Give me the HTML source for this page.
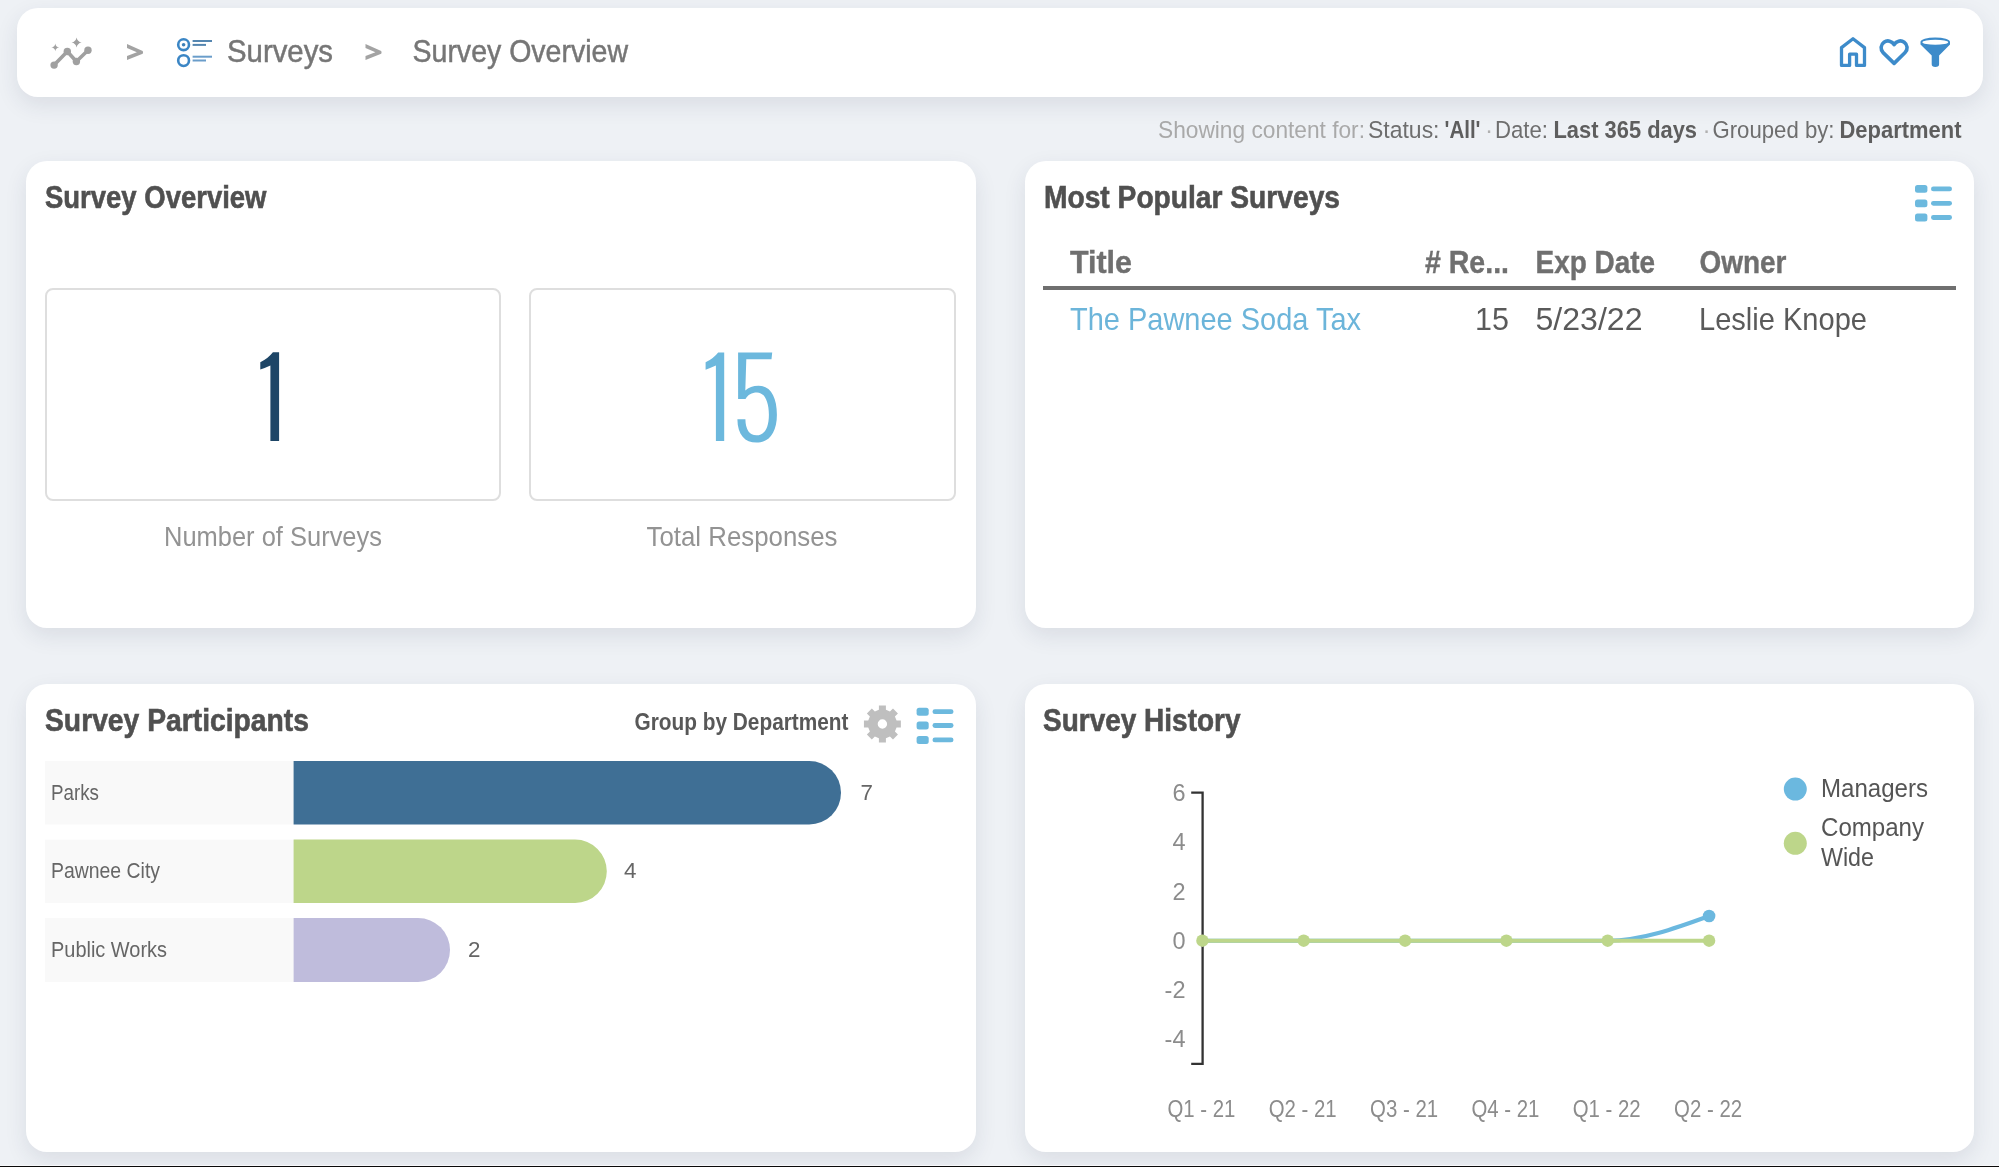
<!DOCTYPE html>
<html>
<head>
<meta charset="utf-8">
<style>
html,body{margin:0;padding:0;}
body{width:1999px;height:1167px;overflow:hidden;background:#eef1f5;position:relative;font-family:"Liberation Sans",sans-serif;}
.abs{position:absolute;}
.card{position:absolute;background:#fff;border-radius:21px;box-shadow:0 8px 22px rgba(40,50,80,0.10);}
#hdr{left:17px;top:8px;width:1966px;height:89px;}
#c1{left:26px;top:161px;width:950px;height:467px;}
#c2{left:1025px;top:161px;width:949px;height:467px;}
#c3{left:26px;top:684px;width:950px;height:468px;}
#c4{left:1025px;top:684px;width:949px;height:468px;}
#bline{left:0;top:1166px;width:1999px;height:1px;background:#0a0a0a;}
#wline{left:0;top:1165px;width:1999px;height:1px;background:#f7f8fa;}
.box{position:absolute;border:2px solid #dedede;border-radius:8px;background:#fff;box-sizing:border-box;}
#svg{position:absolute;left:0;top:0;will-change:transform;}
text{font-family:"Liberation Sans",sans-serif;}
.ttl{font-weight:bold;fill:#505050;font-size:31.3px;stroke:#505050;stroke-width:0.6px;}
</style>
</head>
<body>
<div class="card" id="hdr"></div>
<div class="card" id="c1"></div>
<div class="card" id="c2"></div>
<div class="card" id="c3"></div>
<div class="card" id="c4"></div>
<div class="box" style="left:45px;top:288px;width:456px;height:213px;"></div>
<div class="box" style="left:529px;top:288px;width:427px;height:213px;"></div>
<div class="abs" id="wline"></div><div class="abs" id="bline"></div>
<svg id="svg" width="1999" height="1167" viewBox="0 0 1999 1167">
<!-- ===== HEADER ===== -->
<g id="chartIcon" fill="#a0a0a0" stroke="#a0a0a0">
  <polyline points="54.1,65.1 67.3,51.5 76.4,61.5 88,50.2" fill="none" stroke-width="3.6" stroke-linejoin="round"/>
  <circle cx="54.1" cy="65.1" r="3.7" stroke="none"/>
  <circle cx="67.3" cy="51.5" r="3.7" stroke="none"/>
  <circle cx="76.4" cy="61.5" r="3.7" stroke="none"/>
  <circle cx="88" cy="50.2" r="3.7" stroke="none"/>
  <path d="M76.6,37.6 Q77.4,41.8 81.6,42.6 Q77.4,43.4 76.6,47.6 Q75.8,43.4 71.6,42.6 Q75.8,41.8 76.6,37.6Z" stroke="none"/>
  <path d="M55.3,43.5 Q55.6,47.1 59.2,47.4 Q55.6,47.7 55.3,51.3 Q55,47.7 51.4,47.4 Q55,47.1 55.3,43.5Z" stroke="none"/>
</g>
<path transform="translate(-238.5,0)" d="M365.5,44 L381.2,51 Q382,52.4 381.2,53.8 L365.5,60 V56 L375.4,52.3 L365.5,48 Z" fill="#a3a3a3"/>
<g id="surveyIcon" stroke="#3b86c5" fill="none">
  <circle cx="183.6" cy="44.7" r="5.4" stroke-width="2.6"/>
  <circle cx="183.6" cy="44.7" r="1.8" fill="#3d80b8" stroke="none"/>
  <circle cx="183.6" cy="60.6" r="5.4" stroke-width="2.6"/>
  <line x1="192.6" y1="41" x2="212" y2="41" stroke-width="2" stroke="#5586b0"/>
  <line x1="192.6" y1="44.9" x2="206" y2="44.9" stroke-width="2" stroke="#5586b0"/>
  <line x1="192.6" y1="56.7" x2="212" y2="56.7" stroke-width="2" stroke="#6a9dca"/>
  <line x1="192.6" y1="60.5" x2="206" y2="60.5" stroke-width="2" stroke="#6a9dca"/>
</g>
<text x="227" y="62" font-size="31.5" fill="#767676" stroke="#767676" stroke-width="0.5" textLength="106" lengthAdjust="spacingAndGlyphs">Surveys</text>
<path d="M365.5,44 L381.2,51 Q382,52.4 381.2,53.8 L365.5,60 V56 L375.4,52.3 L365.5,48 Z" fill="#a3a3a3"/>
<text x="412.5" y="62" font-size="31.5" fill="#767676" stroke="#767676" stroke-width="0.5" textLength="215.5" lengthAdjust="spacingAndGlyphs">Survey Overview</text>

<g id="homeIcon" fill="none" stroke="#3d8bca" stroke-width="3.3" stroke-linejoin="round">
  <path d="M1841.5,65.4 V47.6 L1853,38.8 L1864.5,47.6 V65.4 H1856.5 V54.2 H1849.6 V65.4 Z"/>
</g>
<g id="heartIcon" fill="none" stroke="#3d8bca" stroke-width="3.6" stroke-linejoin="round">
  <path d="M1894.1,63.4 L1883.1,52.6 A6.85,6.85 0 1 1 1894.1,44.73 A6.85,6.85 0 1 1 1905.1,52.6 Z"/>
</g>
<g id="funnelIcon" fill="#3d8bca">
  <path d="M1920.5,42 A14.75,4.6 0 0 1 1950,42 V44.6 L1939.1,55.6 V64.3 Q1939.1,66.9 1935.35,66.9 Q1931.7,66.9 1931.7,64.3 V55.6 L1920.5,44.6 Z"/>
  <ellipse cx="1935.3" cy="42.2" rx="12.9" ry="2.5" fill="#fff"/>
</g>

<!-- filter line -->
<g font-size="24.3">
<text x="1158" y="138" fill="#a9a9a9" textLength="207" lengthAdjust="spacingAndGlyphs">Showing content for:</text>
<text x="1368" y="138" fill="#6e6e6e" textLength="71.5" lengthAdjust="spacingAndGlyphs">Status:</text>
<text x="1444.5" y="138" fill="#5e5e5e" font-weight="bold" textLength="36" lengthAdjust="spacingAndGlyphs">'All'</text>
<text x="1485" y="138" fill="#b0b0b0">·</text>
<text x="1495" y="138" fill="#6e6e6e" textLength="53" lengthAdjust="spacingAndGlyphs">Date:</text>
<text x="1553.5" y="138" fill="#5e5e5e" font-weight="bold" textLength="143.5" lengthAdjust="spacingAndGlyphs">Last 365 days</text>
<text x="1702.5" y="138" fill="#b0b0b0">·</text>
<text x="1712.5" y="138" fill="#6e6e6e" textLength="122" lengthAdjust="spacingAndGlyphs">Grouped by:</text>
<text x="1839.5" y="138" fill="#5e5e5e" font-weight="bold" textLength="122" lengthAdjust="spacingAndGlyphs">Department</text>
</g>

<!-- ===== CARD 1 ===== -->
<text class="ttl" x="45" y="208" textLength="221.5" lengthAdjust="spacingAndGlyphs">Survey Overview</text>
<path d="M272.9,352.3 H279.1 V440.9 H270.4 V365.4 Q265.6,367.6 260.3,369.6 V362.2 Q268,358.6 272.9,352.3 Z" fill="#1d4566"/>
<path d="M718.2,352.5 H724.2 V440.9 H715.9 V365.6 Q711,367.8 705.6,369.8 V362.3 Q713.2,358.8 718.2,352.5 Z" fill="#6cb8dd"/><path d="M738.1,352.5 H772.2 L771.5,359.2 H746.3 L745.3,390.5 C748.5,387.5 753,385.7 758.5,385.7 C770.5,385.7 776.9,397 776.9,414.7 C776.9,432 769.5,442.6 756.5,442.6 C745,442.6 737.5,435 737.4,419.2 H745.4 C745.5,429.5 749.5,435.3 756.5,435.3 C765,435.3 768.9,427 768.9,414.7 C768.9,401 764,392.4 757,392.4 C751.5,392.4 748,394.5 745.5,399.1 H738.1 Z" fill="#6cb8dd"/>
<text x="273" y="545.6" font-size="27.2" fill="#939393" text-anchor="middle" textLength="218" lengthAdjust="spacingAndGlyphs">Number of Surveys</text>
<text x="742" y="545.6" font-size="27.2" fill="#939393" text-anchor="middle" textLength="191" lengthAdjust="spacingAndGlyphs">Total Responses</text>

<!-- ===== CARD 2 ===== -->
<text class="ttl" x="1044" y="207.6" textLength="296" lengthAdjust="spacingAndGlyphs">Most Popular Surveys</text>
<g fill="#6cb9de">
  <rect x="1915" y="185" width="12.4" height="7.8" rx="2.5"/>
  <rect x="1915" y="199.4" width="12.4" height="7.8" rx="2.5"/>
  <rect x="1915" y="213.6" width="12.4" height="7.8" rx="2.5"/>
  <rect x="1931" y="186.5" width="21" height="4.8" rx="2.4"/>
  <rect x="1931" y="200.9" width="21" height="4.8" rx="2.4"/>
  <rect x="1931" y="215.1" width="21" height="4.8" rx="2.4"/>
</g>
<g font-size="32" font-weight="bold" fill="#6f6f6f" stroke="#6f6f6f" stroke-width="0.4">
<text x="1070" y="273" textLength="62" lengthAdjust="spacingAndGlyphs">Title</text>
<text x="1425" y="273" textLength="84" lengthAdjust="spacingAndGlyphs"># Re...</text>
<text x="1535.5" y="273" textLength="119.5" lengthAdjust="spacingAndGlyphs">Exp Date</text>
<text x="1699.5" y="273" textLength="87" lengthAdjust="spacingAndGlyphs">Owner</text>
</g>
<rect x="1043" y="286" width="913" height="4" fill="#6f6f6f"/>
<g font-size="30.5">
<text x="1070" y="330.2" fill="#6cb5da" textLength="291" lengthAdjust="spacingAndGlyphs">The Pawnee Soda Tax</text>
<text x="1509" y="330.2" fill="#5a5a5a" text-anchor="end">15</text>
<text x="1535.5" y="330.2" fill="#5a5a5a" textLength="107" lengthAdjust="spacingAndGlyphs">5/23/22</text>
<text x="1699" y="330.2" fill="#5a5a5a" textLength="168" lengthAdjust="spacingAndGlyphs">Leslie Knope</text>
</g>

<!-- ===== CARD 3 ===== -->
<text class="ttl" x="45" y="730.8" textLength="264" lengthAdjust="spacingAndGlyphs">Survey Participants</text>
<text x="634.5" y="730.2" font-size="23.3" font-weight="bold" fill="#585858" textLength="214" lengthAdjust="spacingAndGlyphs">Group by Department</text>
<g id="gear" fill="#bfbfbf">
  <path d="M878.90,709.83 L878.90,705.53 L885.90,705.53 L885.90,709.83 L889.95,711.50 L892.99,708.46 L897.94,713.41 L894.90,716.45 L896.57,720.50 L900.87,720.50 L900.87,727.50 L896.57,727.50 L894.90,731.55 L897.94,734.59 L892.99,739.54 L889.95,736.50 L885.90,738.17 L885.90,742.47 L878.90,742.47 L878.90,738.17 L874.85,736.50 L871.81,739.54 L866.86,734.59 L869.90,731.55 L868.23,727.50 L863.93,727.50 L863.93,720.50 L868.23,720.50 L869.90,716.45 L866.86,713.41 L871.81,708.46 L874.85,711.50 Z M887.10,724.00 A4.70,4.70 0 1 0 877.70,724.00 A4.70,4.70 0 1 0 887.10,724.00 Z" fill-rule="evenodd"/>
</g>
<g fill="#6cb9de">
  <rect x="916.6" y="707.8" width="12.1" height="7.9" rx="2.5"/>
  <rect x="916.6" y="721.6" width="12.1" height="7.9" rx="2.5"/>
  <rect x="916.6" y="736" width="12.1" height="7.9" rx="2.5"/>
  <rect x="932.5" y="709.3" width="21" height="4.8" rx="2.4"/>
  <rect x="932.5" y="723.1" width="21" height="4.8" rx="2.4"/>
  <rect x="932.5" y="737.5" width="21" height="4.8" rx="2.4"/>
</g>
<g fill="#f9f9f9">
  <rect x="45" y="761" width="249" height="63.5"/>
  <rect x="45" y="839.6" width="249" height="63.4"/>
  <rect x="45" y="918" width="249" height="64"/>
</g>
<path d="M293.6,761 H809.25 A31.75,31.75 0 0 1 809.25,824.5 H293.6 Z" fill="#3f6f95"/>
<path d="M293.6,839.6 H575.1 A31.7,31.7 0 0 1 575.1,903 H293.6 Z" fill="#bdd68a"/>
<path d="M293.6,918 H418 A32,32 0 0 1 418,982 H293.6 Z" fill="#bfbcdc"/>
<g font-size="22.4" fill="#666">
<text x="51" y="800" textLength="48" lengthAdjust="spacingAndGlyphs">Parks</text>
<text x="51" y="878" textLength="109" lengthAdjust="spacingAndGlyphs">Pawnee City</text>
<text x="51" y="956.5" textLength="116" lengthAdjust="spacingAndGlyphs">Public Works</text>
<text x="860.5" y="800">7</text>
<text x="624" y="878">4</text>
<text x="468" y="956.5">2</text>
</g>

<!-- ===== CARD 4 ===== -->
<text class="ttl" x="1043" y="730.8" textLength="197.5" lengthAdjust="spacingAndGlyphs">Survey History</text>
<path d="M1191.2,792.7 H1202.6 V1063.8 H1191.2" fill="none" stroke="#333" stroke-width="2.3"/>
<g font-size="23.5" fill="#8c8c8c" text-anchor="end">
<text x="1185.5" y="800.9">6</text>
<text x="1185.5" y="850.2">4</text>
<text x="1185.5" y="899.5">2</text>
<text x="1185.5" y="948.8">0</text>
<text x="1185.5" y="998.1">-2</text>
<text x="1185.5" y="1047.4">-4</text>
</g>
<path d="M1202.4,940.7 H1607.7 C1641.5,940.7 1675.3,928.4 1709.1,916" fill="none" stroke="#6bb8df" stroke-width="4"/>
<line x1="1202.4" y1="940.7" x2="1709.1" y2="940.7" stroke="#bdd68a" stroke-width="4"/>
<g fill="#bdd68a">
<circle cx="1202.4" cy="940.7" r="6.2"/>
<circle cx="1303.7" cy="940.7" r="6.2"/>
<circle cx="1405.1" cy="940.7" r="6.2"/>
<circle cx="1506.4" cy="940.7" r="6.2"/>
<circle cx="1607.7" cy="940.7" r="6.2"/>
<circle cx="1709.1" cy="940.7" r="6.2"/>
</g>
<circle cx="1709.1" cy="916" r="6.3" fill="#6bb8df"/>
<g font-size="24.4" fill="#8c8c8c" text-anchor="middle">
<text x="1201.4" y="1116.5" textLength="68" lengthAdjust="spacingAndGlyphs">Q1 - 21</text>
<text x="1302.7" y="1116.5" textLength="68" lengthAdjust="spacingAndGlyphs">Q2 - 21</text>
<text x="1404.1" y="1116.5" textLength="68" lengthAdjust="spacingAndGlyphs">Q3 - 21</text>
<text x="1505.4" y="1116.5" textLength="68" lengthAdjust="spacingAndGlyphs">Q4 - 21</text>
<text x="1606.7" y="1116.5" textLength="68" lengthAdjust="spacingAndGlyphs">Q1 - 22</text>
<text x="1708.1" y="1116.5" textLength="68" lengthAdjust="spacingAndGlyphs">Q2 - 22</text>
</g>
<circle cx="1795.3" cy="789.1" r="11.5" fill="#6bb8df"/>
<circle cx="1795.3" cy="843.3" r="11.5" fill="#bdd68a"/>
<g font-size="25" fill="#555">
<text x="1821" y="796.5" textLength="107" lengthAdjust="spacingAndGlyphs">Managers</text>
<text x="1821" y="835.5" textLength="103" lengthAdjust="spacingAndGlyphs">Company</text>
<text x="1821" y="865.5" textLength="53" lengthAdjust="spacingAndGlyphs">Wide</text>
</g>
</svg>
</body>
</html>
